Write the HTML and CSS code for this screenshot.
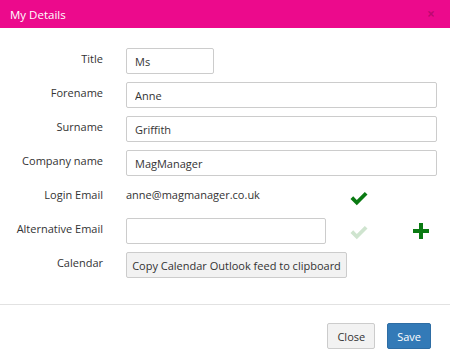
FILE: index.html
```html
<!DOCTYPE html>
<html lang="en">
<head>
    <meta charset="UTF-8">
    <meta name="viewport" content="width=device-width, initial-scale=1.0">
    <title>My Details</title>
    <link rel="stylesheet" href="styles.css">
</head>
<body>
    <div class="modal">
        <!-- header -->
        <div class="modal-header">
            <span class="modal-title">My Details</span>
            <span class="modal-close">&times;</span>
        </div>

        <!-- form -->
        <div class="modal-body">
            <div class="form-row">
                <label class="form-label">Title</label>
                <input type="text" class="form-input input-short" value="Ms">
            </div>
            <div class="form-row">
                <label class="form-label">Forename</label>
                <input type="text" class="form-input" value="Anne">
            </div>
            <div class="form-row">
                <label class="form-label">Surname</label>
                <input type="text" class="form-input" value="Griffith">
            </div>
            <div class="form-row">
                <label class="form-label">Company name</label>
                <input type="text" class="form-input" value="MagManager">
            </div>
            <div class="form-row">
                <label class="form-label">Login Email</label>
                <div class="email-line">
                    <span class="static-text">anne@magmanager.co.uk</span>
                    <svg class="icon-check" viewBox="0 0 18 15"><path d="M0.5 8 L3.2 5.3 L6.8 8.9 L14.8 0.9 L17.5 3.6 L6.8 14.3 Z"/></svg>
                </div>
            </div>
            <div class="form-row">
                <label class="form-label">Alternative Email</label>
                <div class="email-line">
                    <input type="text" class="form-input input-mid" value="">
                    <svg class="icon-check faint" viewBox="0 0 18 15"><path d="M0.5 8 L3.2 5.3 L6.8 8.9 L14.8 0.9 L17.5 3.6 L6.8 14.3 Z"/></svg>
                    <svg class="icon-plus" viewBox="0 0 16 16"><path d="M6 0 H10 V6 H16 V10 H10 V16 H6 V10 H0 V6 H6 Z"/></svg>
                </div>
            </div>
            <div class="form-row">
                <label class="form-label">Calendar</label>
                <div><button class="btn btn-default btn-wide">Copy Calendar Outlook feed to clipboard</button></div>
            </div>
        </div>

        <!-- footer -->
        <div class="modal-footer">
            <button class="btn btn-default">Close</button>
            <button class="btn btn-primary">Save</button>
        </div>
    </div>
</body>
</html>
```
FILE: styles.css
```css
body {
    margin: 0;
    font-family: "Open Sans", "Liberation Sans", sans-serif;
    font-size: 11px;
    color: #333;
    background: #fff;
}
.modal {
    width: 450px;
    height: 364px;
    background: #fff;
}
.modal-header {
    height: 28px;
    background: #ec0a8c;
    display: flex;
    align-items: center;
    justify-content: space-between;
    padding: 0 15px 0 10px;
}
.modal-title {
    color: #fff;
    font-size: 11.5px;
}
.modal-close {
    color: rgba(0, 0, 0, 0.2);
    font-size: 14px;
    font-weight: bold;
    line-height: 1;
}
.modal-body {
    padding: 20px 13px 26px 0;
    display: flex;
    flex-direction: column;
    gap: 8px;
    border-bottom: 1px solid #e2e2e2;
}
.form-row {
    display: grid;
    grid-template-columns: 103px 1fr;
    column-gap: 23px;
    min-height: 26px;
}
.form-label {
    text-align: right;
    padding-top: 3px;
}
.form-input {
    height: 26px;
    box-sizing: border-box;
    border: 1px solid #ccc;
    border-radius: 2px;
    padding: 0 8px;
    font-family: inherit;
    font-size: 11px;
    color: #333;
    width: 100%;
}
.input-short {
    width: 88px;
}
.input-mid {
    width: 200px;
    flex: none;
}
.email-line {
    display: flex;
    align-items: center;
}
.static-text {
    width: 224px;
    align-self: flex-start;
    padding-top: 3px;
}
.icon-check {
    width: 18px;
    height: 15px;
    fill: #0a7a12;
    margin-top: 2px;
}
.input-mid + .icon-check {
    margin-left: 24px;
}
.icon-check.faint {
    fill: #cfe4cf;
}
.icon-plus {
    width: 16px;
    height: 16px;
    fill: #0a7a12;
    margin-left: 45px;
}
.btn {
    height: 26px;
    box-sizing: border-box;
    border-radius: 2px;
    font-family: inherit;
    font-size: 11px;
    padding: 0 9px;
    cursor: pointer;
}
.btn-wide {
    width: 221px;
    padding: 0;
}
.btn-default {
    background: #f2f2f2;
    border: 1px solid #ccc;
    color: #333;
}
.btn-primary {
    background: #337ab7;
    border: 1px solid #2e6da4;
    color: #fff;
}
.modal-footer {
    display: flex;
    justify-content: flex-end;
    gap: 12px;
    padding: 18px 19px 0 0;
}
```
